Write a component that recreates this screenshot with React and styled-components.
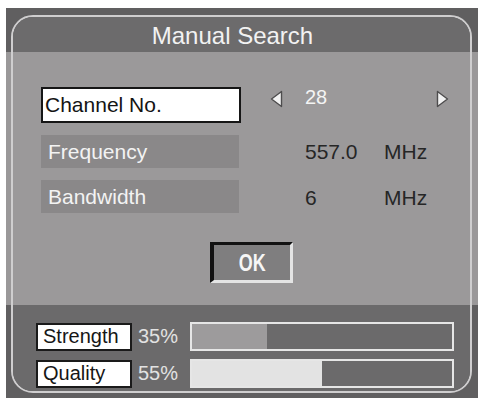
import React from "react";
import styled, { createGlobalStyle } from "styled-components";

const GlobalStyle = createGlobalStyle`
  html, body {
    margin: 0;
    padding: 0;
    background: #ffffff;
  }
  body {
    font-family: "Liberation Sans", Arial, sans-serif;
  }
`;

const Page = styled.div`
  padding: 8px 3px 0 6px;
`;

const Frame = styled.div`
  width: 472px;
  height: 390px;
  box-sizing: border-box;
  padding: 7px 6px 5px 5px;
  background: linear-gradient(
    to bottom,
    #605f60 0,
    #605f60 44px,
    #9a9899 44px,
    #9a9899 297px,
    #605f60 297px
  );
`;

const Panel = styled.div`
  height: 100%;
  box-sizing: border-box;
  border: 2px solid #cfcecf;
  border-radius: 22px;
  overflow: hidden;
  display: flex;
  flex-direction: column;
`;

const TitleBar = styled.div`
  height: 35px;
  flex: none;
  background: #6c6b6c;
  color: #f2f2f2;
  font-size: 24px;
  line-height: 38px;
  text-align: center;
  padding-right: 18px;
`;

const Body = styled.div`
  height: 253px;
  flex: none;
  box-sizing: border-box;
  background: #9b999a;
  padding: 35px 0 0 28px;
  display: flex;
  flex-direction: column;
`;

const Fields = styled.div`
  display: flex;
  flex-direction: column;
  gap: 12px;
`;

const FieldRow = styled.div`
  display: grid;
  grid-template-columns: 200px 29px 35px 79px 52px 14px;
  align-items: center;
  font-size: 21px;
`;

const LabelBox = styled.div`
  box-sizing: border-box;
  display: flex;
  align-items: center;
  width: ${(p) => (p.$active ? "200px" : "198px")};
  height: ${(p) => (p.$active ? "36px" : "33px")};
  padding-left: ${(p) => (p.$active ? "2px" : "7px")};
  border: ${(p) => (p.$active ? "2px solid #161616" : "none")};
  background: ${(p) => (p.$active ? "#ffffff" : "#8a8889")};
  color: ${(p) => (p.$active ? "#141414" : "#f3f3f3")};
  font-size: 21px;
`;

const Cell = styled.div`
  grid-column: ${(p) => p.$col};
  align-self: ${(p) => (p.$top ? "start" : "center")};
  color: ${(p) => (p.$light ? "#f4f4f4" : "#262626")};
  font-size: ${(p) => (p.$light ? "20px" : "21px")};
  line-height: ${(p) => (p.$light ? "20px" : "24px")};
  margin-top: ${(p) => (p.$shift ? `${p.$shift}px` : "0")};
  display: flex;
`;

const OkRow = styled.div`
  margin-top: 29px;
  padding-left: 169px;
  display: flex;
`;

const OkButton = styled.div`
  width: 83px;
  height: 41px;
  box-sizing: border-box;
  border-top: 3px solid #121212;
  border-left: 4px solid #121212;
  border-right: 3px solid #e4e4e4;
  border-bottom: 3px solid #e4e4e4;
  background: #7f7e7f;
  display: flex;
  align-items: center;
  justify-content: center;
`;

const OkText = styled.span`
  display: inline-block;
  color: #f6f6f6;
  font-size: 23px;
  font-weight: bold;
  transform: scaleX(0.78);
  margin-top: 1px;
`;

const Meters = styled.div`
  flex: 1;
  background: #6b6a6b;
  padding: 17px 0 0 23px;
  display: flex;
  flex-direction: column;
  gap: 9px;
`;

const MeterRow = styled.div`
  display: grid;
  grid-template-columns: 96px 58px 264px;
  align-items: center;
  height: 28px;
`;

const MeterLabel = styled.div`
  box-sizing: border-box;
  height: 28px;
  border: 2px solid #1a1a1a;
  background: #ffffff;
  color: #161616;
  font-size: 20px;
  padding-left: 5px;
  display: flex;
  align-items: center;
`;

const Percent = styled.div`
  padding-left: 6px;
  color: #e2e2e2;
  font-size: 20px;
`;

const Bar = styled.div`
  box-sizing: border-box;
  height: 29px;
  border: 2px solid #e6e6e6;
  background: #6b6a6b;
  display: flex;
`;

const BarFill = styled.div`
  height: 100%;
  background: ${(p) => p.$color};
`;

const Arrow = ({ dir }) => (
  <svg width="13" height="18" viewBox="0 0 13 18">
    {dir === "left" ? (
      <polygon
        points="11.5,1.5 11.5,16.5 1.5,9"
        fill="#f2f2f2"
        stroke="#4e4d4e"
        strokeWidth="1.4"
        strokeLinejoin="round"
      />
    ) : (
      <polygon
        points="1.5,1.5 1.5,16.5 11.5,9"
        fill="#f2f2f2"
        stroke="#4e4d4e"
        strokeWidth="1.4"
        strokeLinejoin="round"
      />
    )}
  </svg>
);

const meters = [
  { label: "Strength", value: 35, level: 29, color: "#9d9b9c" },
  { label: "Quality", value: 55, level: 50, color: "#e3e3e3" },
];

export default function App() {
  return (
    <>
      <GlobalStyle />
      <Page>
        <Frame>
          <Panel>
            <TitleBar>Manual Search</TitleBar>
            <Body>
              <Fields>
                <FieldRow>
                  <LabelBox $active>Channel No.</LabelBox>
                  <Cell $col={3} $top $shift={3}>
                    <Arrow dir="left" />
                  </Cell>
                  <Cell $col={4} $top $light>
                    28
                  </Cell>
                  <Cell $col={6} $top $shift={3}>
                    <Arrow dir="right" />
                  </Cell>
                </FieldRow>
                <FieldRow>
                  <LabelBox>Frequency</LabelBox>
                  <Cell $col={4}>557.0</Cell>
                  <Cell $col={5}>MHz</Cell>
                </FieldRow>
                <FieldRow>
                  <LabelBox>Bandwidth</LabelBox>
                  <Cell $col={4} $shift={3}>6</Cell>
                  <Cell $col={5} $shift={3}>MHz</Cell>
                </FieldRow>
              </Fields>
              <OkRow>
                <OkButton>
                  <OkText>OK</OkText>
                </OkButton>
              </OkRow>
            </Body>
            <Meters>
              {meters.map((m) => (
                <MeterRow key={m.label}>
                  <MeterLabel>{m.label}</MeterLabel>
                  <Percent>{m.value}%</Percent>
                  <Bar>
                    <BarFill $color={m.color} style={{ width: `${m.level}%` }} />
                  </Bar>
                </MeterRow>
              ))}
            </Meters>
          </Panel>
        </Frame>
      </Page>
    </>
  );
}
